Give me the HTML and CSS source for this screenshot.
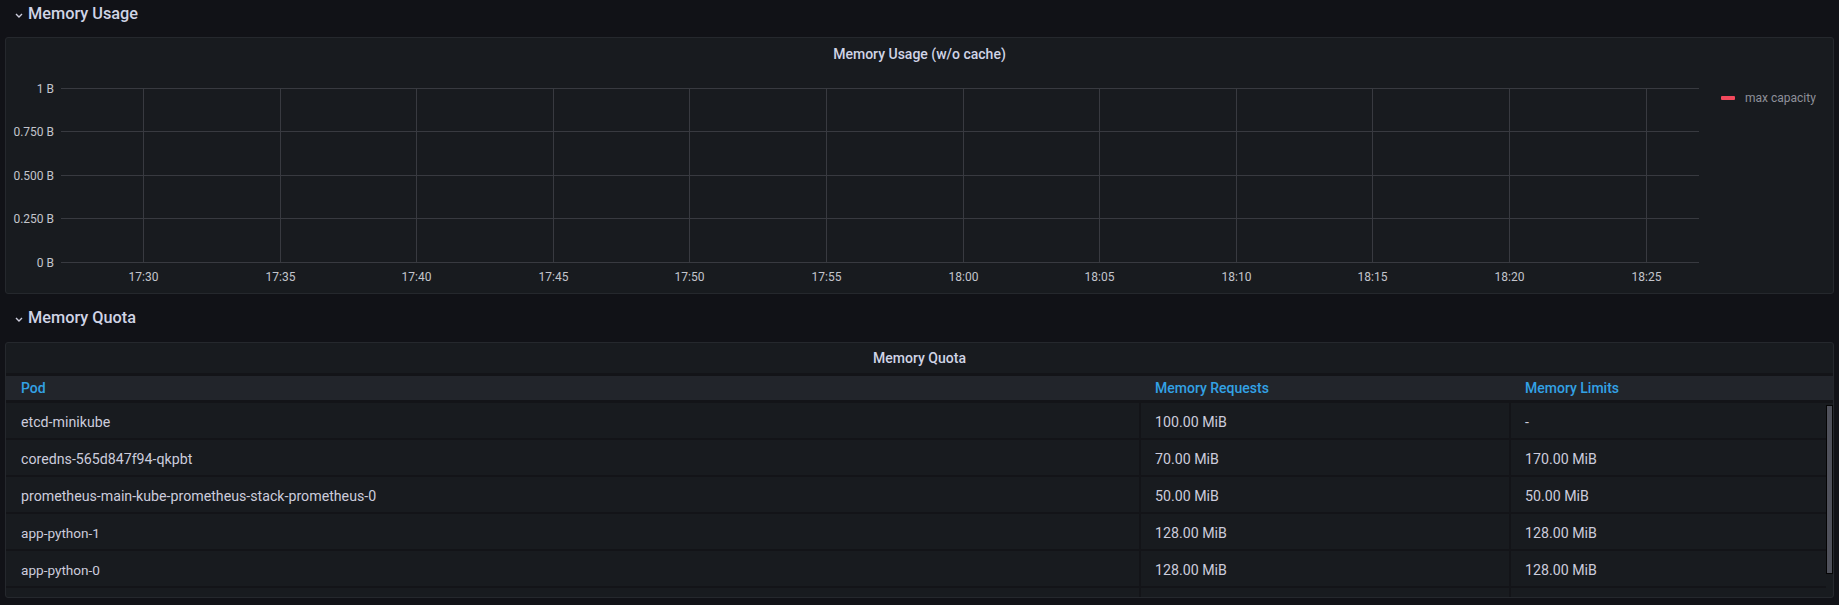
FILE: index.html
```html
<!DOCTYPE html>
<html lang="en">
<head>
<meta charset="utf-8">
<title>Memory dashboard</title>
<link rel="stylesheet" href="styles.css">
</head>
<body>
<div class="dash">
  <div class="row-header">
    <svg class="chev" width="8" height="5" viewBox="0 0 8 5"><path d="M1 1 L4 4 L7 1" fill="none" stroke="#ccccdc" stroke-width="1.4"/></svg>
    <span class="row-title">Memory Usage</span>
  </div>

  <section class="panel chart-panel">
    <div class="panel-title">Memory Usage (w/o cache)</div>
    <div class="chart-body">
      <svg class="chart" width="1700" height="220" viewBox="0 0 1700 220">
        <g class="grid" stroke="#383a40" stroke-width="1">
          <line x1="55" y1="15.5" x2="1693" y2="15.5"/>
          <line x1="55" y1="58.5" x2="1693" y2="58.5"/>
          <line x1="55" y1="102.5" x2="1693" y2="102.5"/>
          <line x1="55" y1="145.5" x2="1693" y2="145.5"/>
          <line x1="55" y1="189.5" x2="1693" y2="189.5"/>
          <line x1="137.5" y1="15" x2="137.5" y2="189"/>
          <line x1="274.5" y1="15" x2="274.5" y2="189"/>
          <line x1="410.5" y1="15" x2="410.5" y2="189"/>
          <line x1="547.5" y1="15" x2="547.5" y2="189"/>
          <line x1="683.5" y1="15" x2="683.5" y2="189"/>
          <line x1="820.5" y1="15" x2="820.5" y2="189"/>
          <line x1="957.5" y1="15" x2="957.5" y2="189"/>
          <line x1="1093.5" y1="15" x2="1093.5" y2="189"/>
          <line x1="1230.5" y1="15" x2="1230.5" y2="189"/>
          <line x1="1366.5" y1="15" x2="1366.5" y2="189"/>
          <line x1="1503.5" y1="15" x2="1503.5" y2="189"/>
          <line x1="1640.5" y1="15" x2="1640.5" y2="189"/>
        </g>
        <g class="ylabels" text-anchor="end">
          <text x="48" y="19.5">1 B</text>
          <text x="48" y="62.5">0.750 B</text>
          <text x="48" y="106.5">0.500 B</text>
          <text x="48" y="149.5">0.250 B</text>
          <text x="48" y="193.5">0 B</text>
        </g>
        <g class="xlabels" text-anchor="middle">
          <text x="137.5" y="208">17:30</text>
          <text x="274.5" y="208">17:35</text>
          <text x="410.5" y="208">17:40</text>
          <text x="547.5" y="208">17:45</text>
          <text x="683.5" y="208">17:50</text>
          <text x="820.5" y="208">17:55</text>
          <text x="957.5" y="208">18:00</text>
          <text x="1093.5" y="208">18:05</text>
          <text x="1230.5" y="208">18:10</text>
          <text x="1366.5" y="208">18:15</text>
          <text x="1503.5" y="208">18:20</text>
          <text x="1640.5" y="208">18:25</text>
        </g>
      </svg>
      <div class="legend">
        <div class="legend-item">
          <span class="legend-swatch"></span>
          <span class="legend-label">max capacity</span>
        </div>
      </div>
    </div>
  </section>

  <div class="row-header row-header-second">
    <svg class="chev" width="8" height="5" viewBox="0 0 8 5"><path d="M1 1 L4 4 L7 1" fill="none" stroke="#ccccdc" stroke-width="1.4"/></svg>
    <span class="row-title">Memory Quota</span>
  </div>

  <section class="panel table-panel">
    <div class="panel-title table-title">Memory Quota</div>
    <div class="thead">
      <div class="th">Pod</div>
      <div class="th th-sep">Memory Requests</div>
      <div class="th th-sep">Memory Limits</div>
    </div>
    <div class="tbody">
      <div class="rows">
        <div class="tr"><div class="td">etcd-minikube</div><div class="td td-sep">100.00 MiB</div><div class="td td-sep">-</div></div>
        <div class="tr"><div class="td">coredns-565d847f94-qkpbt</div><div class="td td-sep">70.00 MiB</div><div class="td td-sep">170.00 MiB</div></div>
        <div class="tr"><div class="td">prometheus-main-kube-prometheus-stack-prometheus-0</div><div class="td td-sep">50.00 MiB</div><div class="td td-sep">50.00 MiB</div></div>
        <div class="tr"><div class="td td-small">app-python-1</div><div class="td td-sep">128.00 MiB</div><div class="td td-sep">128.00 MiB</div></div>
        <div class="tr"><div class="td td-small">app-python-0</div><div class="td td-sep">128.00 MiB</div><div class="td td-sep">128.00 MiB</div></div>
        <div class="tr"><div class="td"></div><div class="td td-sep"></div><div class="td td-sep"></div></div>
      </div>
      <div class="scroll-track"><div class="scroll-thumb"></div></div>
    </div>
  </section>
</div>
</body>
</html>
```
FILE: styles.css
```css
* { box-sizing: border-box; }

html, body {
  margin: 0;
  padding: 0;
  background: #111217;
}

body {
  font-family: Roboto, "Liberation Sans", Arial, sans-serif;
  color: #ccccdc;
  width: 1839px;
  height: 605px;
  overflow: hidden;
}

.dash {
  display: flex;
  flex-direction: column;
}

.row-header {
  height: 26px;
  display: flex;
  align-items: center;
  padding-left: 15px;
  padding-top: 2px;
  gap: 5px;
  margin-bottom: 11px;
}

.row-header-second {
  margin-top: 10px;
  margin-bottom: 12px;
}

.chev {
  display: block;
  margin-top: 2px;
}

.row-title {
  font-size: 16.3px;
  font-weight: 500;
  color: #d0d4e6;
  line-height: 1;
}

.panel {
  margin: 0 5px;
  background: #181b1f;
  border: 1px solid #25282d;
  border-radius: 3px;
  overflow: hidden;
}

.chart-panel {
  height: 257px;
  display: flex;
  flex-direction: column;
}

.panel-title {
  height: 35px;
  display: flex;
  align-items: center;
  justify-content: center;
  font-size: 14px;
  font-weight: 500;
  color: #d0d4e6;
  padding-bottom: 3px;
}

.chart-body {
  display: flex;
  height: 220px;
}

.chart {
  display: block;
  flex: none;
}

.chart text {
  font-family: Roboto, "Liberation Sans", Arial, sans-serif;
  font-size: 12px;
  fill: #c3c5cc;
}

.legend {
  flex: 1;
  padding-left: 15px;
  padding-top: 18px;
}

.legend-item {
  display: flex;
  align-items: center;
  gap: 10px;
  height: 14px;
}

.legend-swatch {
  width: 14px;
  height: 4px;
  background: #f2495c;
  border-radius: 1px;
}

.legend-label {
  font-size: 12px;
  color: #8e909a;
}

.table-panel {
  height: 256px;
  display: flex;
  flex-direction: column;
}

.table-title {
  height: 30px;
  flex: none;
  padding-bottom: 0;
  border-bottom: 3px solid #131418;
  box-sizing: content-box;
}

.thead {
  display: grid;
  grid-template-columns: 1133px 370px 1fr;
  height: 27px;
  flex: none;
  background: #22252b;
  border-bottom: 3px solid #131418;
}

.th {
  display: flex;
  align-items: center;
  padding-left: 15px;
  font-size: 14px;
  font-weight: 500;
  color: #33a2e5;
}

.th-sep {
  padding-left: 14px;
  border-left: 2px solid transparent;
}

.tbody {
  flex: 1;
  display: flex;
  overflow: hidden;
  min-height: 0;
}

.rows {
  width: 1820px;
  flex: none;
}

.tr {
  display: grid;
  grid-template-columns: 1133px 370px 1fr;
  height: 37px;
  border-bottom: 2px solid #131418;
}

.td {
  display: flex;
  align-items: center;
  padding-left: 15px;
  padding-top: 2px;
  font-size: 14.2px;
  color: #ccccdc;
  white-space: nowrap;
}

.td-small {
  font-size: 13.6px;
}

.td-sep {
  padding-left: 14px;
  border-left: 2px solid #131418;
}

.scroll-track {
  width: 7px;
  flex: none;
  padding-top: 2px;
}

.scroll-thumb {
  width: 7px;
  height: 169px;
  background: #4f515b;
  border: 1px solid #050505;
}
```
